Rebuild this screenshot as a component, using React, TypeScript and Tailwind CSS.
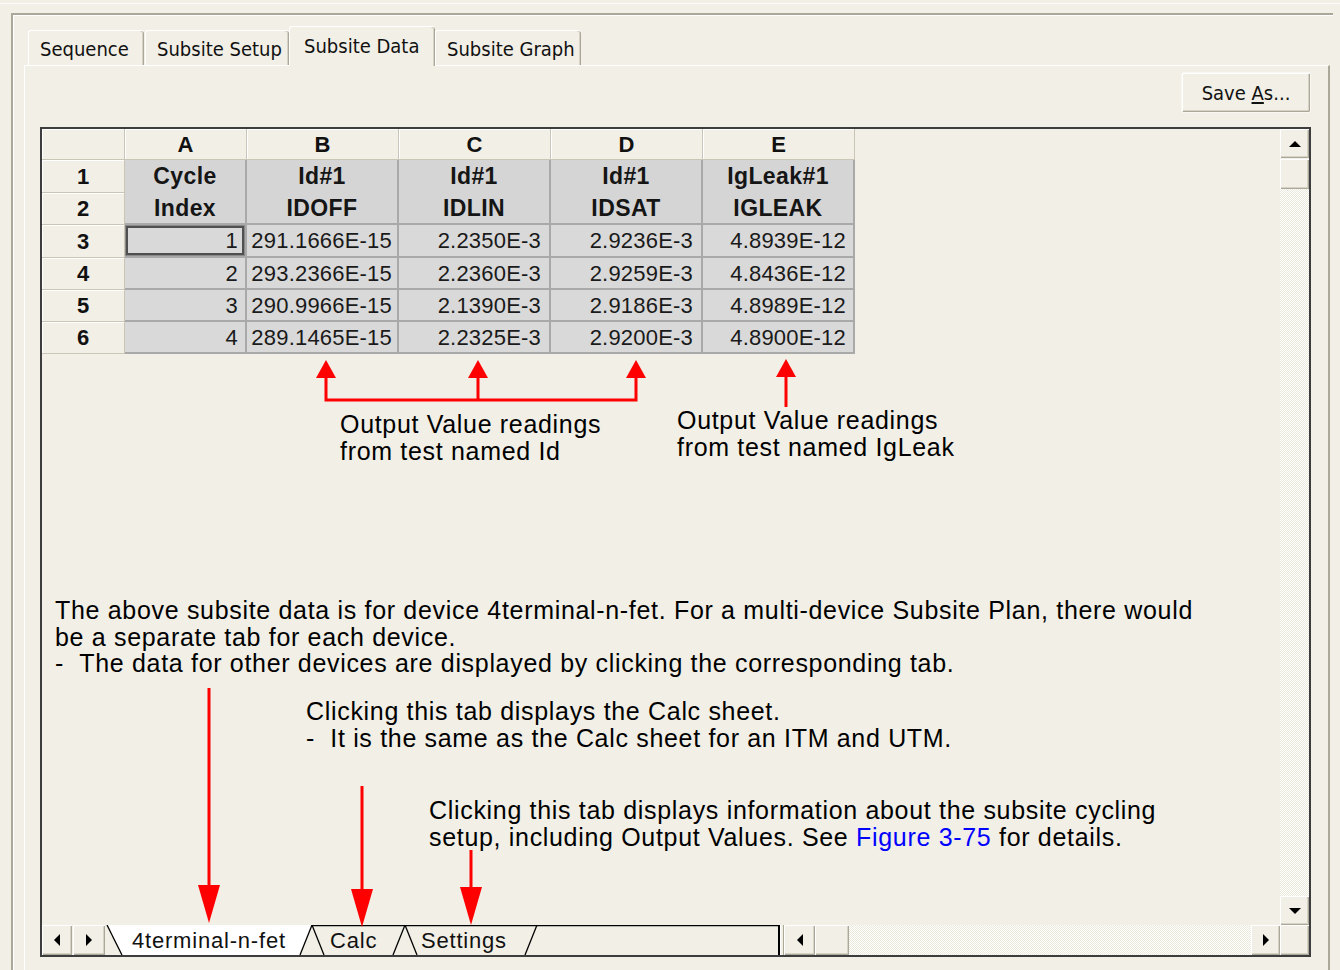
import React from 'react';

const ui = "font-['Tahoma','DejaVu_Sans_Condensed','Liberation_Sans',sans-serif]";
const arial = "font-['Liberation_Sans','Arial',sans-serif]";

const heads = [
  ['Cycle', 'Index'],
  ['Id#1', 'IDOFF'],
  ['Id#1', 'IDLIN'],
  ['Id#1', 'IDSAT'],
  ['IgLeak#1', 'IGLEAK'],
];

const rows = [
  ['1', '291.1666E-15', '2.2350E-3', '2.9236E-3', '4.8939E-12'],
  ['2', '293.2366E-15', '2.2360E-3', '2.9259E-3', '4.8436E-12'],
  ['3', '290.9966E-15', '2.1390E-3', '2.9186E-3', '4.8989E-12'],
  ['4', '289.1465E-15', '2.2325E-3', '2.9200E-3', '4.8900E-12'],
];

const pads = ['pr-[7px]', 'pr-[5px]', 'pr-[8px]', 'pr-[8px]', 'pr-[7px]'];

const btn =
  'bg-[#f1efe6] shadow-[inset_1px_1px_0_#ffffff,inset_-1px_-1px_0_#aca899,inset_-2px_-2px_0_#d6d3c6] flex items-center justify-center';

const hatch =
  'bg-[repeating-conic-gradient(#ffffff_0%_25%,#ebe8dc_0%_50%)] bg-size-[2px_2px]';

function Tri({ dir }: { dir: 'up' | 'down' | 'left' | 'right' }) {
  const pts = {
    up: '0,6 12,6 6,0',
    down: '0,0 12,0 6,6',
    left: '6,0 6,12 0,6',
    right: '0,0 0,12 6,6',
  }[dir];
  const w = dir === 'up' || dir === 'down' ? 12 : 6;
  const h = dir === 'up' || dir === 'down' ? 6 : 12;
  return (
    <svg width={w} height={h} viewBox={`0 0 ${w} ${h}`}>
      <polygon points={pts} fill="#000" />
    </svg>
  );
}

function HeaderCell({ children, className = '' }: { children?: React.ReactNode; className?: string }) {
  return (
    <div
      className={`bg-[#f1efe6] border-r border-b border-[#c9c6b8] shadow-[inset_1px_1px_0_#ffffff] flex items-center justify-center font-bold text-[22px] text-[#111] ${arial} ${className}`}
    >
      {children}
    </div>
  );
}

function Sheet() {
  return (
    <div className="grid grid-cols-[83px_122px_152px_152px_152px_152px] grid-rows-[31px_33px_32px_33px_32px_32px_32px] w-[813px]">
      <HeaderCell />
      {['A', 'B', 'C', 'D', 'E'].map((c) => (
        <HeaderCell key={c}>{c}</HeaderCell>
      ))}
      <HeaderCell className="col-start-1 row-start-2">1</HeaderCell>
      {heads.map((h, i) => (
        <div
          key={i}
          className={`row-span-2 row-start-2 bg-[#d5d5d5] border-r-2 border-b-2 border-[#a9a9a9] flex flex-col items-center justify-center font-bold text-[23px] leading-[32px] tracking-[0.4px] text-[#151515] ${arial}`}
        >
          <span>{h[0]}</span>
          <span>{h[1]}</span>
        </div>
      ))}
      <HeaderCell className="col-start-1 row-start-3">2</HeaderCell>
      {rows.map((r, ri) => (
        <React.Fragment key={ri}>
          <HeaderCell className="col-start-1">{ri + 3}</HeaderCell>
          {r.map((v, ci) => (
            <div
              key={ci}
              className={`bg-[#d9d9d9] border-r-2 border-b-2 border-[#a9a9a9] flex items-center justify-end text-[22px] tracking-[0.2px] text-[#1a1a1a] ${arial} ${pads[ci]} ${
                ri === 0 && ci === 0 ? 'shadow-[inset_0_0_0_1px_#8a8a8a,inset_0_0_0_3px_#505050]' : ''
              }`}
            >
              {v}
            </div>
          ))}
        </React.Fragment>
      ))}
    </div>
  );
}

function SheetTabs() {
  return (
    <div className="relative w-[673px] h-full">
      <svg className="absolute inset-0" width="673" height="30" viewBox="0 0 673 30">
        <polygon points="2,0 17,30 195,30 207,0" fill="#ffffff" />
        <line x1="207" y1="0.5" x2="673" y2="0.5" stroke="#000" strokeWidth="1.5" />
        <g stroke="#000" strokeWidth="1.3" fill="none">
          <line x1="2" y1="0" x2="17" y2="30" />
          <line x1="195" y1="30" x2="207" y2="0" />
          <line x1="207" y1="0" x2="219" y2="30" />
          <line x1="288" y1="30" x2="300" y2="0" />
          <line x1="300" y1="0" x2="312" y2="30" />
          <line x1="420" y1="30" x2="432" y2="0" />
        </g>
      </svg>
      <div className={`relative flex h-full items-center text-[22px] tracking-[0.8px] text-[#111] ${arial}`}>
        <span className="w-[207px] pl-[27px]">4terminal-n-fet</span>
        <span className="w-[93px] pl-[18px]">Calc</span>
        <span className="w-[132px] pl-[16px]">Settings</span>
      </div>
    </div>
  );
}

function Arrows() {
  const up = (x: number, tip: number) => `${x - 10},${tip + 18} ${x + 10},${tip + 18} ${x},${tip}`;
  const down = (x: number, top: number, tip: number) => `${x - 11},${top} ${x + 11},${top} ${x},${tip}`;
  return (
    <svg className="absolute left-0 top-0" width="1340" height="970" viewBox="0 0 1340 970">
      <g stroke="#ff0000" strokeWidth="3" fill="none">
        <polyline points="326,376 326,400 636,400 636,376" />
        <line x1="478" y1="376" x2="478" y2="400" />
        <line x1="786" y1="376" x2="786" y2="407" />
        <line x1="209" y1="688" x2="209" y2="888" />
        <line x1="362" y1="786" x2="362" y2="892" />
        <line x1="471" y1="850" x2="471" y2="890" />
      </g>
      <g fill="#ff0000">
        <polygon points={up(326, 360)} />
        <polygon points={up(478, 360)} />
        <polygon points={up(636, 360)} />
        <polygon points={up(786, 359)} />
        <polygon points={down(209, 885, 923)} />
        <polygon points={down(362, 889, 927)} />
        <polygon points={down(471, 887, 925)} />
      </g>
    </svg>
  );
}

function Notes() {
  const t = `absolute whitespace-nowrap text-[25px] leading-[26.5px] tracking-[0.68px] text-black ${arial}`;
  return (
    <div className="absolute inset-0 pointer-events-none">
      <Arrows />
      <p className={`${t} left-[340px] top-[411px]`}>
        Output Value readings
        <br />
        from test named Id
      </p>
      <p className={`${t} left-[677px] top-[407px]`}>
        Output Value readings
        <br />
        from test named IgLeak
      </p>
      <p className={`${t} left-[55px] top-[597px]`}>
        The above subsite data is for device 4terminal-n-fet. For a multi-device Subsite Plan, there would
        <br />
        be a separate tab for each device.
        <br />
        -&nbsp;&nbsp;The data for other devices are displayed by clicking the corresponding tab.
      </p>
      <p className={`${t} left-[306px] top-[698px]`}>
        Clicking this tab displays the Calc sheet.
        <br />
        -&nbsp;&nbsp;It is the same as the Calc sheet for an ITM and UTM.
      </p>
      <p className={`${t} left-[429px] top-[797px]`}>
        Clicking this tab displays information about the subsite cycling
        <br />
        setup, including Output Values. See <span className="text-[#0000ff]">Figure 3-75</span> for details.
      </p>
    </div>
  );
}

export default function App() {
  const tabs = [
    { label: 'Sequence', w: 'w-[116px]' },
    { label: 'Subsite Setup', w: 'w-[144px]' },
    { label: 'Subsite Data', w: 'w-[146px]', active: true },
    { label: 'Subsite Graph', w: 'w-[146px]' },
  ];

  return (
    <div className="relative w-[1340px] h-[970px] overflow-hidden bg-[#f1efe6] pt-[3px]">
      <div className="h-px bg-[#fbfaf6]" />
      <div className="ml-[11px] mt-[9px] w-[1322px] h-[990px] border-t-2 border-l-2 border-[#aca899]">
        <div className="h-full border-t border-l border-white pl-[10px] pt-[10px] flex flex-col">
          {/* property tabs */}
          <div className={`flex items-end h-[39px] pl-[4px] text-[20px] text-[#111] ${ui}`}>
            {tabs.map((t) =>
              t.active ? (
                <div
                  key={t.label}
                  className={`${t.w} -ml-px h-[40px] -mb-px z-10 bg-[#f1efe6] border-t border-l border-white rounded-t-[3px] shadow-[inset_-1px_0_0_#aca899,inset_-2px_0_0_#d6d3c6] flex items-start pt-[4px] pl-[14px]`}
                >
                  {t.label}
                </div>
              ) : (
                <div
                  key={t.label}
                  className={`${t.w} h-[35px] mr-px bg-[#f1efe6] border-t border-l border-white rounded-t-[3px] shadow-[inset_-1px_0_0_#aca899,inset_-2px_0_0_#d6d3c6] flex items-center pl-[11px] pt-[2px]`}
                >
                  {t.label}
                </div>
              )
            )}
          </div>

          {/* tab page */}
          <div className="w-[1306px] flex-1 border-t border-l border-white border-r-2 border-r-[#aca899] flex flex-col">
            <div className="flex justify-end pr-[17px] pt-[6px]">
              <button
                className={`w-[130px] h-[41px] ${btn} rounded-[2px] border border-[#f8f7f2] text-[20px] text-[#111] ${ui}`}
              >
                <span>
                  Save <span className="underline underline-offset-2">A</span>s...
                </span>
              </button>
            </div>

            <div className="ml-[15px] mt-[14px] w-[1271px] h-[830px] border-2 border-[#3d3d3d] flex flex-col bg-[#f1efe6]">
              <div className="flex flex-1 min-h-0">
                <div className="flex-1">
                  <Sheet />
                </div>
                <div className="w-[29px] flex flex-col">
                  <div className={`h-[29px] ${btn}`}>
                    <Tri dir="up" />
                  </div>
                  <div className={`h-[30px] mt-px ${btn}`} />
                  <div className={`flex-1 ${hatch}`} />
                  <div className={`h-[29px] ${btn}`}>
                    <Tri dir="down" />
                  </div>
                </div>
              </div>

              <div className="h-[30px] flex">
                <div className={`w-[30px] h-full ${btn}`}>
                  <Tri dir="left" />
                </div>
                <div className={`w-[32px] h-full ml-px ${btn}`}>
                  <Tri dir="right" />
                </div>
                <SheetTabs />
                <div className="w-[6px] h-full border-l-2 border-black shadow-[inset_1px_0_0_#ffffff,inset_-1px_0_0_#aca899]" />
                <div className={`w-[31px] h-full ${btn}`}>
                  <Tri dir="left" />
                </div>
                <div className={`w-[34px] h-full ${btn}`} />
                <div className={`flex-1 h-full ${hatch}`} />
                <div className={`w-[29px] h-full ${btn}`}>
                  <Tri dir="right" />
                </div>
                <div className={`w-[29px] h-full ${btn}`} />
              </div>
            </div>
          </div>
        </div>
      </div>
      <Notes />
    </div>
  );
}
